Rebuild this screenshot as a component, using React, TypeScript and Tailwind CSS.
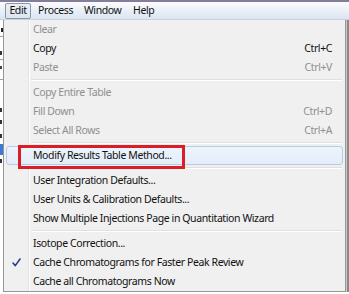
import React from "react";

type Item =
  | { kind: "sep" }
  | { kind: "item"; label: string; shortcut?: string; disabled?: boolean; checked?: boolean; hot?: boolean };

const items: Item[] = [
  { kind: "item", label: "Clear", disabled: true },
  { kind: "item", label: "Copy", shortcut: "Ctrl+C" },
  { kind: "item", label: "Paste", shortcut: "Ctrl+V", disabled: true },
  { kind: "sep" },
  { kind: "item", label: "Copy Entire Table", disabled: true },
  { kind: "item", label: "Fill Down", shortcut: "Ctrl+D", disabled: true },
  { kind: "item", label: "Select All Rows", shortcut: "Ctrl+A", disabled: true },
  { kind: "sep" },
  { kind: "item", label: "Modify Results Table Method...", hot: true },
  { kind: "sep" },
  { kind: "item", label: "User Integration Defaults..." },
  { kind: "item", label: "User Units & Calibration Defaults..." },
  { kind: "item", label: "Show Multiple Injections Page in Quantitation Wizard" },
  { kind: "sep" },
  { kind: "item", label: "Isotope Correction..." },
  { kind: "item", label: "Cache Chromatograms for Faster Peak Review", checked: true },
  { kind: "item", label: "Cache all Chromatograms Now" },
];

function Check() {
  return (
    <svg width="9" height="9" viewBox="0 0 9 9">
      <path d="M1 5 L3.3 7.6 L8 1" fill="none" stroke="#2b3f8c" strokeWidth="1.6" strokeLinecap="round" strokeLinejoin="round" />
    </svg>
  );
}

export default function App() {
  return (
    <div
      className="relative w-[349px] h-[294px] overflow-hidden bg-white text-[10.5px] tracking-[-0.4px]"
      style={{ fontFamily: '"Noto Sans", "Open Sans", sans-serif' }}
    >
      <div className="h-[2px] bg-[#857d99]" />
      <div className="h-[18px] flex items-center bg-gradient-to-b from-[#fbfcfe] to-[#dae4f1] border-b border-[#c9d3e0] text-[#111]">
        <div className="ml-[5px] h-[16px] w-[26px] flex items-center justify-center border border-[#8696ab] rounded-[2px] bg-gradient-to-b from-[#e9eef5] to-[#dde5ef]">
          Edit
        </div>
        <span className="ml-[7px] w-[46px]">Process</span>
        <span className="w-[49px]">Window</span>
        <span>Help</span>
      </div>
      <div className="flex h-[274px]">
        <div className="w-[3px] bg-white flex flex-col">
          <div className="h-[8px]" />
          <div className="h-[4px] bg-[#222] w-[2px] ml-[1px]" />
          <div className="h-[4px]" />
          <div className="h-px bg-[#a0a0a0]" />
          <div className="h-[14px]" />
          <div className="h-[4px] bg-[#333] w-[2px]" />
          <div className="h-[4px]" />
          <div className="h-px bg-[#a0a0a0]" />
          <div className="h-[6px]" />
          <div className="h-[3px] bg-[#444] w-[2px]" />
          <div className="h-[10px]" />
          <div className="h-px bg-[#a0a0a0]" />
          <div className="h-[28px]" />
          <div className="h-[4px] bg-[#333] w-[2px]" />
          <div className="h-[8px]" />
          <div className="h-[4px] bg-[#333] w-[2px]" />
          <div className="h-[10px]" />
          <div className="h-[4px] bg-[#333] w-[2px]" />
          <div className="h-[6px]" />
          <div className="h-[11px] bg-[#3a7bd5]" />
          <div className="h-[4px]" />
          <div className="h-[4px] bg-[#333] w-[2px]" />
        </div>
        <div className="w-[343px] h-[272px] flex flex-col border-l border-r border-b border-[#979797] bg-[#f0f0f0]">
          {items.map((it, i) =>
            it.kind === "sep" ? (
              <div key={i} className="h-[6px] flex">
                <div className="w-[25px] border-r border-[#e2e3e3] shadow-[1px_0_0_#ffffff]" />
                <div className="flex-1 flex flex-col justify-center pl-[2px] pr-[3px]">
                  <div className="h-px bg-[#e0e0e0]" />
                  <div className="h-px bg-white" />
                </div>
              </div>
            ) : it.hot ? (
              <div
                key={i}
                className="h-[19px] mx-[2px] flex items-center border border-[#b3cce8] rounded-[3px] bg-gradient-to-b from-[#eef4fc] to-[#e3edf9] text-[#111]"
              >
                <div className="w-[22px] h-full" />
                <span className="pl-[4px] whitespace-nowrap">{it.label}</span>
              </div>
            ) : (
              <div
                key={i}
                className={`h-[19px] flex items-center ${it.disabled ? "text-[#8f8f8f]" : "text-[#111]"}`}
              >
                <div className="w-[25px] h-full border-r border-[#e2e3e3] shadow-[1px_0_0_#ffffff] flex items-center justify-center">
                  {it.checked ? <Check /> : null}
                </div>
                <span className="pl-[4px] whitespace-nowrap">{it.label}</span>
                {it.shortcut ? <span className="ml-auto pr-[13px]">{it.shortcut}</span> : null}
              </div>
            )
          )}
        </div>
        <div className="w-[3px] h-[272px] flex">
          <div className="w-px bg-[#c8c8c8]" />
          <div className="w-[2px] bg-[#8a8a8a]" />
        </div>
      </div>
      <div className="absolute left-[18px] top-[145px] w-[167px] h-[24px] border-[3px] border-[#dc1d25]" />
    </div>
  );
}
